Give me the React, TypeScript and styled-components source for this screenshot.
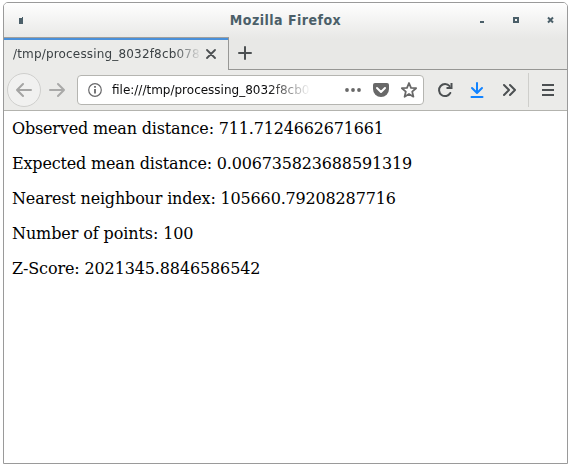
import React from "react";
import styled, { createGlobalStyle } from "styled-components";

const GlobalStyle = createGlobalStyle`
  * { box-sizing: border-box; }
  body { margin: 0; background: #fff; overflow: hidden; }
`;

const Desktop = styled.div`
  width: 571px;
  height: 467px;
  padding: 2px 3px;
  background: #fff;
`;

const Window = styled.main`
  width: 565px;
  height: 462px;
  display: flex;
  flex-direction: column;
  border: 1px solid #9a9a9a;
  border-radius: 5px 5px 0 0;
  overflow: hidden;
  background: #fff;
`;

const Chrome = styled.div`
  flex: none;
  background: linear-gradient(#fefefe, #e8e8e6 36px, #e8e8e6);
`;

const TitleBar = styled.header`
  height: 34px;
  display: grid;
  grid-template-columns: 100px 1fr 100px;
  align-items: center;
  color: #4b5f69;
`;

const Title = styled.h1`
  margin: 0;
  text-align: center;
  font: bold 14px/18px "DejaVu Sans Condensed", "DejaVu Sans", sans-serif;
  letter-spacing: 0.47px;
`;

const WindowMark = styled.div`
  padding-left: 15px;
  display: flex;
`;

const WindowButtons = styled.div`
  display: flex;
  justify-content: flex-end;
  gap: 24px;
  padding-right: 13px;
`;

const TabStrip = styled.nav`
  height: 33px;
  display: flex;
`;

const Tab = styled.div`
  width: 225px;
  height: 33px;
  display: flex;
  align-items: center;
  gap: 4px;
  padding-left: 9px;
  border-top: 1px solid #a0a09e;
  border-right: 1px solid #979795;
  background: linear-gradient(#4a90d9 2px, #ebebe9 2px);
`;

const FadingText = styled.span<{ $width: number; $color: string; $spacing: number; $fade: number }>`
  width: ${(p) => p.$width}px;
  flex: none;
  overflow: hidden;
  white-space: nowrap;
  font: 12px/18px "DejaVu Sans", sans-serif;
  letter-spacing: ${(p) => p.$spacing}px;
  color: ${(p) => p.$color};
  mask-image: linear-gradient(to left, transparent, #000 ${(p) => p.$fade}px);
`;

const TabStripRest = styled.div`
  flex: 1;
  padding: 8px 0 0 8px;
  border-bottom: 1px solid #969694;
`;

const Toolbar = styled.div`
  height: 41px;
  display: flex;
  align-items: center;
  padding: 0 11px 0 3px;
  background: #ebebe9;
  border-bottom: 1px solid #b3b3ae;
`;

const BackButton = styled.button`
  width: 34px;
  height: 34px;
  padding: 0;
  display: grid;
  place-items: center;
  border: 1px solid #cfcfcd;
  border-radius: 50%;
  background: #f1f1f0;
`;

const IconSlot = styled.span<{ $left: number }>`
  display: flex;
  flex: none;
  margin-left: ${(p) => p.$left}px;
`;

const AddressBar = styled.div`
  width: 347px;
  height: 30px;
  margin-left: 12px;
  padding-left: 10px;
  display: flex;
  align-items: center;
  border: 1px solid #b5b5b1;
  border-radius: 4px;
  background: #fff;
`;

const AddressText = styled.div`
  margin-left: 10px;
  display: flex;
`;

const Divider = styled.span`
  width: 1px;
  height: 34px;
  margin-left: 11px;
  background: #cececb;
`;

const Page = styled.section`
  padding: 8px;
  color: #000;
`;

const Result = styled.p<{ $spacing: number }>`
  margin: 0 0 16px;
  font: 16px/19px "DejaVu Serif", serif;
  letter-spacing: ${(p) => p.$spacing}px;
  white-space: nowrap;
`;

type IconProps = { color?: string; size?: number; children: React.ReactNode };
const Icon = ({ color = "#4c5052", size = 16, children }: IconProps) => (
  <svg width={size} height={size} viewBox="0 0 16 16" fill="none" stroke={color} strokeWidth="2" strokeLinecap="round" strokeLinejoin="round" display="block">
    {children}
  </svg>
);

const results = [
  { text: "Observed mean distance: 711.7124662671661", spacing: -0.17 },
  { text: "Expected mean distance: 0.006735823688591319", spacing: -0.17 },
  { text: "Nearest neighbour index: 105660.79208287716", spacing: -0.17 },
  { text: "Number of points: 100", spacing: -0.1 },
  { text: "Z-Score: 2021345.8846586542", spacing: -0.13 },
];

export default function App() {
  return (
    <Desktop>
      <GlobalStyle />
      <Window>
        <Chrome>
          <TitleBar>
            <WindowMark>
              <svg width="4" height="7" fill="#4b5f69" display="block"><path d="M0 1h3V0h1v7H0z" /></svg>
            </WindowMark>
            <Title>Mozilla Firefox</Title>
            <WindowButtons>
              <svg width="10" height="8" fill="#4b5f69"><path d="M2 5h4v2H2z" /></svg>
              <svg width="10" height="8" fill="#4b5f69"><path fillRule="evenodd" d="M1 1h6v6H1zM3 3v2h2V3z" /></svg>
              <svg width="8" height="8" stroke="#4b5f69" strokeWidth="2"><path d="m2 1.5 5 5m0-5-5 5" /></svg>
            </WindowButtons>
          </TitleBar>
          <TabStrip>
            <Tab>
              <FadingText $width={189} $color="#3c4245" $spacing={0.17} $fade={28}>/tmp/processing_8032f8cb078</FadingText>
              <svg width="10" height="10" stroke="#4c5052" strokeWidth="1.8" strokeLinecap="round"><path d="m1 1 8 8m0-8-8 8" /></svg>
            </Tab>
            <TabStripRest>
              <Icon><path d="M8 2v12M2 8h12" /></Icon>
            </TabStripRest>
          </TabStrip>
        </Chrome>
        <Toolbar>
          <BackButton aria-label="Back">
            <Icon color="#a5a5a4"><path d="M15 8H1m6-6L1 8l6 6" /></Icon>
          </BackButton>
          <IconSlot $left={8}>
            <Icon color="#a9a9a8"><path d="M1 8h14M9 2l6 6-6 6" /></Icon>
          </IconSlot>
          <AddressBar>
            <svg width="14" height="14" viewBox="0 0 14 14" fill="none" stroke="#68686a" strokeWidth="1.2">
              <circle cx="7" cy="7" r="6.3" /><path strokeWidth="1.8" d="M7 6v4.5M7 3v1.7" />
            </svg>
            <AddressText>
              <FadingText $width={199} $color="#0c0c0d" $spacing={0} $fade={44}>file:///tmp/processing_8032f8cb0</FadingText>
            </AddressText>
            <IconSlot $left={34}>
              <Icon><g fill="#686868" stroke="none"><circle cx="2" cy="8" r="1.9" /><circle cx="8" cy="8" r="1.9" /><circle cx="14" cy="8" r="1.9" /></g></Icon>
            </IconSlot>
            <IconSlot $left={12}>
              <Icon><path fill="#686868" stroke="none" d="M2 1h12q2 0 2 2v4a8 8 0 0 1-16 0V3q0-2 2-2" /><path stroke="#fff" d="m4 6 4 4 4-4" /></Icon>
            </IconSlot>
            <IconSlot $left={12}>
              <Icon color="#686868"><path strokeWidth="1.8" d="m8 1 2 4.8 5.1.4-3.9 3.4 1.2 5.1L8 12l-4.4 2.7 1.2-5.1L.9 6.2 6 5.8z" /></Icon>
            </IconSlot>
          </AddressBar>
          <IconSlot $left={13}>
            <Icon><path d="M13.3 11A6 6 0 1 1 12.6 4.2" /><path fill="#4c5052" stroke="none" d="M15.5 1v6H9.5V5H13.5V1z" /></Icon>
          </IconSlot>
          <IconSlot $left={16}>
            <Icon color="#1283ff"><path d="M8 1v9M3 6l5 5 5-5M2.5 15h11" /></Icon>
          </IconSlot>
          <IconSlot $left={16}>
            <Icon><path d="m3 3 5 5-5 5M9 3l5 5-5 5" /></Icon>
          </IconSlot>
          <Divider />
          <IconSlot $left={11}>
            <Icon><path strokeLinecap="butt" d="M2 3h12M2 8h12M2 13h12" /></Icon>
          </IconSlot>
        </Toolbar>
        <Page>
          {results.map((r) => <Result key={r.text} $spacing={r.spacing}>{r.text}</Result>)}
        </Page>
      </Window>
    </Desktop>
  );
}
